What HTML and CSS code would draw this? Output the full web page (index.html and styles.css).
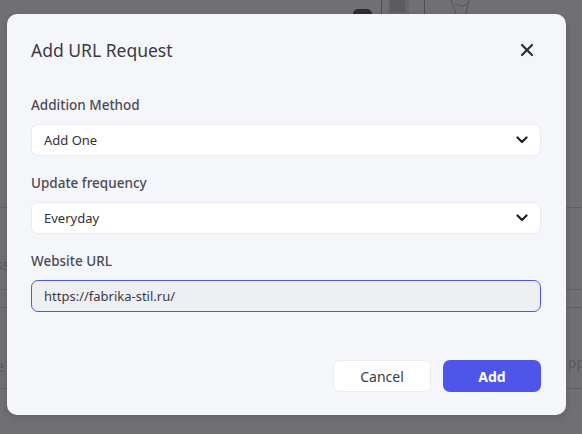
FILE: index.html
```html
<!DOCTYPE html>
<html>
<head>
<meta charset="utf-8">
<link rel="stylesheet" href="styles.css">
</head>
<body>
<div class="page">
  <div class="art">
    <span class="blob"></span>
    <span class="vline first"></span>
    <span class="box"></span>
    <span class="vline second"></span>
    <svg class="hand" width="24" height="14" viewBox="0 0 24 14"><path d="M1 0 C3 6 5 10 6 14 M19 0 C18 4 17 8 16 14 M5 3 C9 7 14 7 18 3" fill="none" stroke="#55555a" stroke-width="1"/></svg>
  </div>
  <div class="rows">
    <div class="row r1"></div>
    <div class="row r2"><span class="ltxt">ss</span></div>
    <div class="row r3"></div>
    <div class="row r4"><span class="ltxt">e</span><span class="rtxt">pp</span></div>
  </div>
</div>

<div class="modal">
  <div class="modal-head">
    <h2 class="title">Add URL Request</h2>
    <svg class="close" width="14" height="14" viewBox="0 0 14 14"><path d="M2 2 L12 12 M12 2 L2 12" stroke="#2c2c36" stroke-width="2.2" stroke-linecap="round"/></svg>
  </div>
  <div class="field">
    <label class="label">Addition Method</label>
    <div class="select"><span>Add One</span><svg width="12" height="8" viewBox="0 0 12 8"><path d="M1.5 1.5 L6 6 L10.5 1.5" fill="none" stroke="#1f1f26" stroke-width="2.2" stroke-linecap="round" stroke-linejoin="round"/></svg></div>
  </div>
  <div class="field">
    <label class="label">Update frequency</label>
    <div class="select"><span>Everyday</span><svg width="12" height="8" viewBox="0 0 12 8"><path d="M1.5 1.5 L6 6 L10.5 1.5" fill="none" stroke="#1f1f26" stroke-width="2.2" stroke-linecap="round" stroke-linejoin="round"/></svg></div>
  </div>
  <div class="field">
    <label class="label">Website URL</label>
    <div class="input">https://fabrika-stil.ru/</div>
  </div>
  <div class="actions">
    <button class="btn cancel">Cancel</button>
    <button class="btn add">Add</button>
  </div>
</div>
</body>
</html>
```
FILE: styles.css
```css
* { box-sizing: border-box; }
html, body { margin: 0; padding: 0; }
body {
  width: 582px;
  height: 434px;
  background: #707074;
  font-family: "Noto Sans", "Open Sans", sans-serif;
  position: relative;
  overflow: hidden;
}
.page { height: 434px; }
.art {
  display: flex;
  align-items: flex-start;
  height: 14px;
  padding-left: 353px;
}
.blob {
  width: 19px; height: 5px; margin-top: 9px;
  background: #2e2e32; border-radius: 5px 5px 0 0;
}
.vline { width: 1px; height: 14px; background: #505054; }
.vline.first { margin-left: 9px; }
.box {
  width: 21px; height: 14px; margin-left: 6px;
  background: linear-gradient(#5c5c60, #5c5c60) 2px 0 / 15px 12px no-repeat, #68686c;
}
.vline.second { margin-left: 15px; }
.hand { margin-left: 25px; }
.rows { padding-top: 193px; }
.row { position: relative; border-top: 1px solid #626266; }
.r1 { height: 82px; }
.r2 { height: 18px; }
.r3 { height: 81px; }
.r4 { height: 46px; }
.ltxt, .rtxt { position: absolute; color: #58585c; font-size: 14px; }
.ltxt { left: -4px; top: -32px; }
.r2 .ltxt { top: -35px; }
.rtxt { right: -3px; top: -36px; }

.modal {
  position: absolute;
  left: 7px; top: 14px;
  width: 559px; height: 401px;
  background: #f5f6fa;
  border-radius: 10px;
  padding: 24px 25px 23px 24px;
  display: flex;
  flex-direction: column;
  box-shadow: 0 2px 6px rgba(0,0,0,0.15);
}
.modal-head {
  display: flex;
  justify-content: space-between;
  align-items: center;
  height: 24px;
  margin-bottom: 33px;
}
.title {
  margin: 0;
  font-size: 17.5px;
  font-weight: 400;
  color: #3a3a44;
  line-height: 24px;
}
.close { margin-right: 7px; }
.field { display: flex; flex-direction: column; gap: 9px; margin-bottom: 17px; }
.label {
  font-size: 13.5px;
  font-weight: 500;
  color: #4a4a54;
  line-height: 20px;
}
.select, .input {
  height: 32px;
  border-radius: 7px;
  display: flex;
  align-items: center;
  justify-content: space-between;
  padding: 0 12px 0 12px;
  font-size: 13px;
  color: #2f2f38;
}
.select { background: #fff; border: 1px solid #ebebef; }
.input { background: #eeeff3; border: 1px solid #5156e6; color: #3a3a44; }
.actions {
  margin-top: auto;
  display: flex;
  justify-content: flex-end;
  gap: 12px;
}
.btn {
  width: 98px;
  height: 32px;
  border-radius: 7px;
  font-family: inherit;
  font-size: 14px;
  cursor: pointer;
}
.cancel { background: #fff; border: 1px solid #ececf0; color: #3a3a44; }
.add { background: #4f55e9; border: none; color: #fff; font-weight: 700; }
```
